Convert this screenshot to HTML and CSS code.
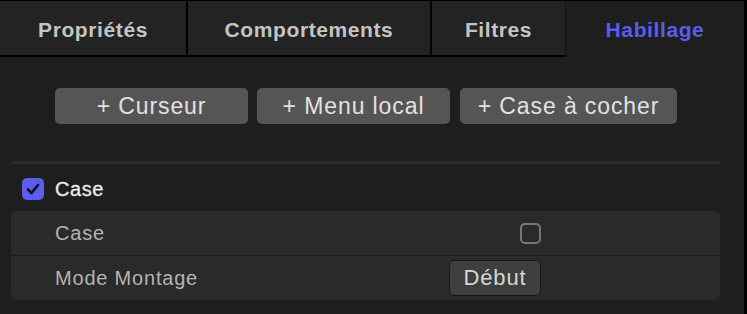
FILE: index.html
```html
<!DOCTYPE html>
<html lang="fr">
<head>
  <meta charset="UTF-8" />
  <title>Habillage</title>
  <link rel="stylesheet" href="styles.css">
</head>
<body>

  <div class="panel">
    <nav class="tabs">
      <div class="tab tab-props">Propriétés</div>
      <div class="tab tab-behav">Comportements</div>
      <div class="tab tab-filters">Filtres</div>
      <div class="tab tab-rig active">Habillage</div>
    </nav>

    <div class="content">
      <div class="add-buttons">
        <button class="add-btn btn-slider">+ Curseur</button>
        <button class="add-btn btn-popup">+ Menu local</button>
        <button class="add-btn btn-check">+ Case à cocher</button>
      </div>

      <hr class="separator">

      <div class="widget-title">
        <span class="checkbox checked">
          <svg width="14" height="12" viewBox="0 0 14 12"><path d="M2 6.5 L5.5 10 L12 2" fill="none" stroke="#111" stroke-width="2.6" stroke-linecap="round" stroke-linejoin="round"/></svg>
        </span>
        <span class="widget-name">Case</span>
      </div>

      <div class="param-box">
        <div class="param-row">
          <span class="param-label">Case</span>
          <span class="param-control control-check"><span class="checkbox empty"></span></span>
        </div>
        <div class="param-row">
          <span class="param-label">Mode Montage</span>
          <span class="param-control"><button class="small-btn">Début</button></span>
        </div>
      </div>
    </div>
  </div>

</body>
</html>
```

FILE: styles.css
```css
:root {
  --bg: #1e1e1e;
  --tab-bg: #232323;
  --accent: #5b5cf0;
  --line: #000;
}

body {
  margin: 0;
  background: var(--bg);
  font-family: "Liberation Sans", Arial, sans-serif;
}

.panel {
  width: 744px;
  height: 313px;
  border-top: 1px solid var(--line);
  border-right: 3px solid var(--line);
  background: var(--bg);
}

/* ONGLETS */
.tabs {
  display: flex;
  height: 56px;
}

.tab {
  box-sizing: border-box;
  display: flex;
  align-items: center;
  justify-content: center;
  background: var(--tab-bg);
  border-bottom: 2px solid var(--line);
  color: #c4c4c4;
  font-weight: bold;
  font-size: 21px;
  letter-spacing: 0.6px;
  padding-top: 3px;
}

.tab-props { width: 188px; border-right: 2px solid var(--line); }
.tab-behav { width: 244px; border-right: 2px solid var(--line); }
.tab-filters { width: 134px; border-right: 1px solid #151515; }
.tab-rig { width: 178px; }

.tab.active {
  background: var(--bg);
  border-bottom: none;
  color: var(--accent);
  padding-bottom: 2px;
}

/* CONTENU */
.content {
  padding: 31px 24px 0 11px;
}

.add-buttons {
  display: flex;
  gap: 9px;
  padding-left: 44px;
}

.add-btn {
  height: 36px;
  border: none;
  border-radius: 5px;
  background: #555;
  color: #e2e2e2;
  font-family: inherit;
  font-size: 23px;
  letter-spacing: 0.9px;
  padding: 0;
}

.btn-slider { width: 193px; }
.btn-popup { width: 193px; }
.btn-check { width: 217px; margin-left: 1px; }

.separator {
  margin: 37px 0 0;
  border: none;
  height: 3px;
  background: #2c2c2c;
}

.widget-title {
  display: flex;
  align-items: center;
  gap: 11px;
  height: 22px;
  margin-top: 14px;
  padding-left: 11px;
}

.checkbox {
  box-sizing: border-box;
  width: 22px;
  height: 22px;
  border-radius: 5px;
  display: flex;
  align-items: center;
  justify-content: center;
}

.checkbox.checked {
  background: var(--accent);
}

.checkbox.empty {
  border: 2px solid #777;
  width: 21px;
  height: 21px;
}

.widget-name {
  color: #ececec;
  font-size: 20px;
  letter-spacing: 0.6px;
  -webkit-text-stroke: 0.3px #ececec;
}

.param-box {
  margin-top: 11px;
  background: #2a2a2a;
  border-radius: 5px;
}

.param-row {
  display: flex;
  align-items: center;
  height: 44px;
  padding-left: 44px;
}

.param-row + .param-row {
  border-top: 1px solid #1c1c1c;
}

.param-label {
  width: 394px;
  color: #b4b4b4;
  font-size: 20px;
  letter-spacing: 0.8px;
}

.control-check {
  padding-left: 71px;
}

.small-btn {
  box-sizing: border-box;
  width: 92px;
  height: 36px;
  border: 1px solid #181818;
  border-radius: 5px;
  background: #3e3e3e;
  color: #d6d6d6;
  font-family: inherit;
  font-size: 22px;
  letter-spacing: 0.9px;
  padding: 0;
}
```
